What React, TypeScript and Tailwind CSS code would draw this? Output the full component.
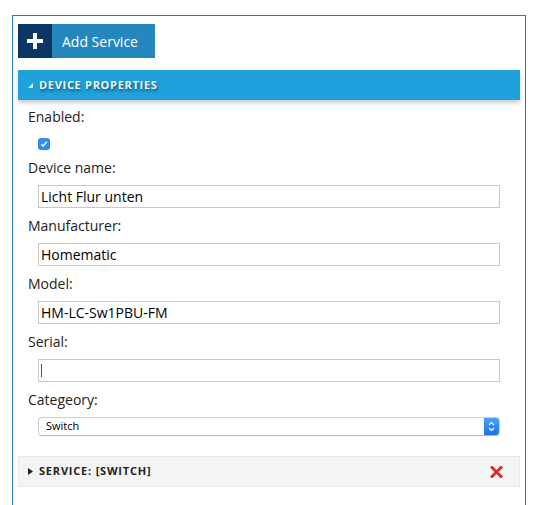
import React from "react";

const font = { fontFamily: '"Open Sans", "Noto Sans", sans-serif' };

function Field({ label, value, caret }: { label: string; value: string; caret?: boolean }) {
  return (
    <div className="flex flex-col">
      <div className="text-[14px] leading-[20px] text-[#222]">{label}</div>
      <div className="mt-[7px] ml-[10px] mr-[20px] h-[23px] border border-[#c8c8c8] bg-white flex items-center px-[2px] text-[14px] text-black">
        {caret ? <span className="inline-block w-px h-[13px] bg-[#555]" /> : value}
      </div>
    </div>
  );
}

export default function App() {
  return (
    <div className="bg-white w-[536px] h-[505px] overflow-hidden pt-[15px] pl-[12px]" style={font}>
      <div className="w-[514px] h-[520px] border border-[#2f7db5] px-[5px] pt-[8px]">
        {/* Add service button */}
        <div className="flex h-[34px]">
          <div className="w-[34px] h-[34px] bg-[#0c3663] flex items-center justify-center">
            <svg width="16" height="16" viewBox="0 0 16 16">
              <rect x="6" y="0" width="4" height="16" fill="#fff" />
              <rect x="0" y="6" width="16" height="4" fill="#fff" />
            </svg>
          </div>
          <div className="w-[103px] h-[34px] bg-[#2488bf] text-white text-[14px] flex items-center pl-[10px]">
            Add Service
          </div>
        </div>

        {/* Device properties header */}
        <div className="mt-[12px] h-[30px] bg-[#1fa2db] flex items-center pl-[10px] shadow-[0_3px_4px_rgba(0,0,0,0.2)]">
          <svg width="5" height="5" viewBox="0 0 5 5" className="mr-[6px] mt-[1px]">
            <polygon points="5,0 5,5 0,5" fill="#e8eef2" />
          </svg>
          <span
            className="text-[11px] font-bold tracking-[0.7px] text-[#eef3f6]"
            style={{ textShadow: "1px 2px 3px rgba(0,0,0,0.5)" }}
          >
            DEVICE PROPERTIES
          </span>
        </div>

        {/* Form */}
        <div className="pl-[10px] pt-[7px] flex flex-col">
          <div className="text-[14px] leading-[20px] text-[#222]">Enabled:</div>
          <div className="mt-[11px] ml-[10px] w-[12px] h-[12px] rounded-[3px] bg-[#2f8ff0] flex items-center justify-center">
            <svg width="8" height="8" viewBox="0 0 8 8">
              <path d="M1.3 4.2 L3.2 6 L6.8 1.8" stroke="#fff" strokeWidth="1.4" fill="none" />
            </svg>
          </div>
          <div className="mt-[8px] flex flex-col gap-[8px]">
            <Field label="Device name:" value="Licht Flur unten" />
            <Field label="Manufacturer:" value="Homematic" />
            <Field label="Model:" value="HM-LC-Sw1PBU-FM" />
            <Field label="Serial:" value="" caret />
            <div className="flex flex-col">
              <div className="text-[14px] leading-[20px] text-[#222]">Categeory:</div>
              <div className="mt-[7px] ml-[10px] mr-[20px] h-[19px] rounded-[4px] border border-[#cfcfcf] border-b-[#b5b5b5] bg-white flex items-center overflow-hidden">
                <span className="flex-1 pl-[7px] text-[11px] text-black">Switch</span>
                <div className="w-[15px] h-full bg-gradient-to-b from-[#4a9ffb] to-[#1a73e8] flex items-center justify-center">
                  <svg width="7" height="11" viewBox="0 0 7 11">
                    <path d="M1 4 L3.5 1.5 L6 4 M1 7 L3.5 9.5 L6 7" stroke="#fff" strokeWidth="1.2" fill="none" />
                  </svg>
                </div>
              </div>
            </div>
          </div>
        </div>

        {/* Service bar */}
        <div className="mt-[20px] h-[31px] bg-[#f4f4f4] border border-[#e8e8e8] flex items-center pl-[9px] pr-[16px]">
          <svg width="5" height="7" viewBox="0 0 5 7" className="mr-[6px]">
            <polygon points="0,0 5,3.5 0,7" fill="#222" />
          </svg>
          <span className="flex-1 text-[11px] font-bold tracking-[0.8px] text-[#222]">SERVICE: [SWITCH]</span>
          <svg width="13" height="12" viewBox="0 0 13 12">
            <path d="M2 1.5 L11 10.5 M11 1.5 L2 10.5" stroke="#d33131" strokeWidth="3" strokeLinecap="square" />
          </svg>
        </div>
      </div>
    </div>
  );
}
